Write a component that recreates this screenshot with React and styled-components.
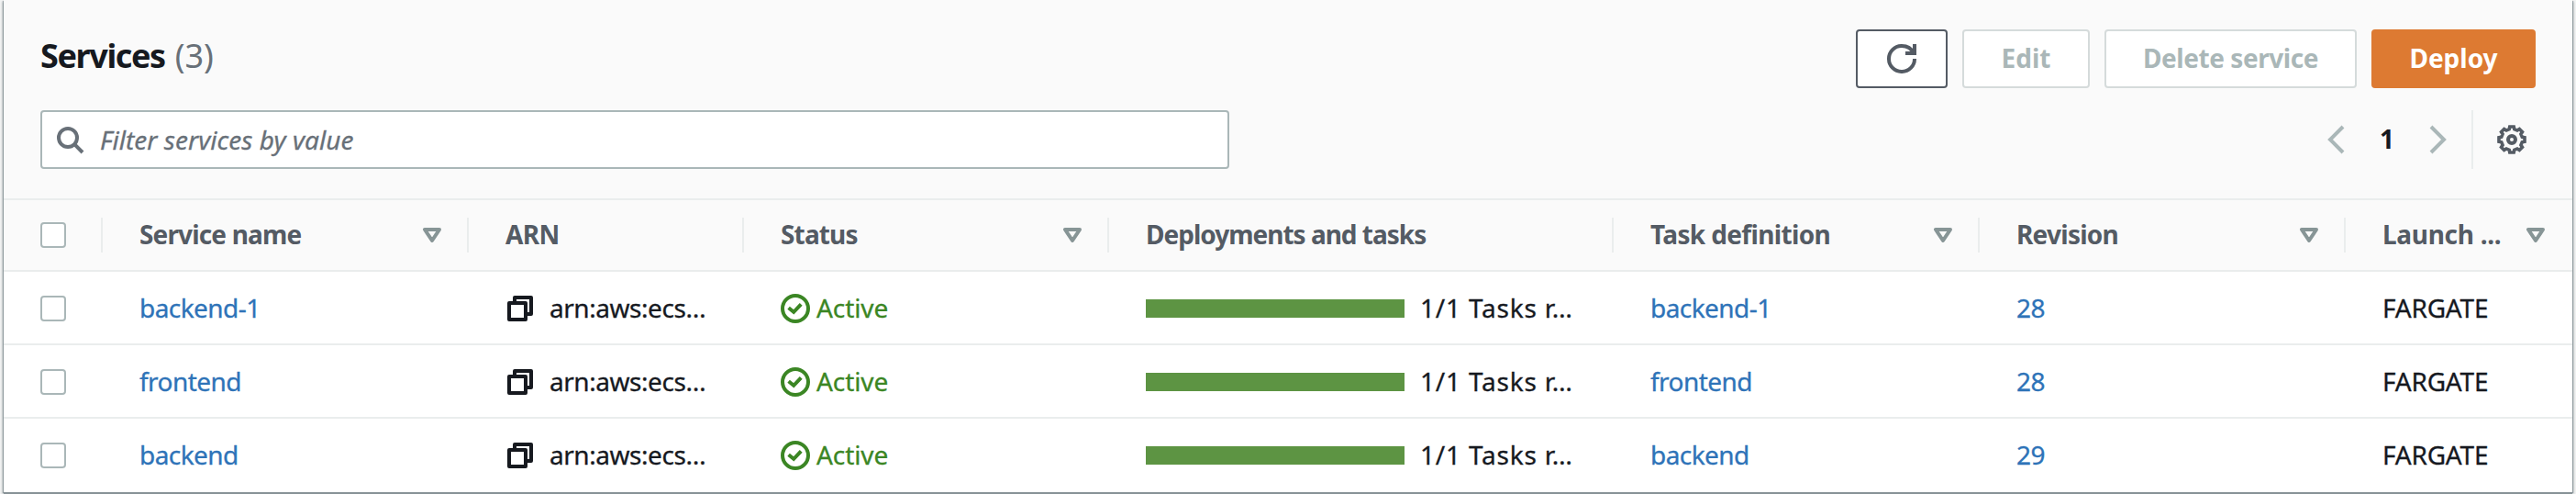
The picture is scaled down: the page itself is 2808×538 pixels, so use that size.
import React from 'react';
import styled, { createGlobalStyle, css } from 'styled-components';

const GlobalStyle = createGlobalStyle`
  * { box-sizing: border-box; }
  body {
    margin: 0;
    background: #f2f3f3;
    color: #16191f;
    font-family: "Noto Sans", "Open Sans", sans-serif;
    font-size: 28px;
    line-height: 44px;
  }
`;

const Page = styled.main`
  width: 2808px;
  height: 538px;
  padding: 0 4px 2px;
  overflow: hidden;
`;

const Panel = styled.section`
  height: 536px;
  background: #fff;
  box-shadow: 0 2px 0 0 #879296, 1px 1px 1px 0 rgba(0, 28, 36, 0.3), -1px 1px 1px 0 rgba(0, 28, 36, 0.3), 2px 2px 2px 0 rgba(0, 28, 36, 0.15), -2px 2px 2px 0 rgba(0, 28, 36, 0.15);
`;

const Header = styled.header`
  height: 216px;
  padding: 32px 40px;
  background: #fafafa;
  display: flex;
  flex-direction: column;
  gap: 24px;
`;

const HeaderRow = styled.div`
  display: flex;
  justify-content: space-between;
  align-items: center;
  height: 64px;
`;

const Title = styled.h2`
  display: flex;
  gap: 11px;
  margin: 0 0 6px;
  font-size: 36px;
  font-weight: 700;
  letter-spacing: -1.4px;
`;

const Count = styled.span`
  font-weight: 400;
  letter-spacing: 0;
  color: #687078;
`;

const Actions = styled.div`
  display: flex;
  gap: 16px;
`;

const variants = {
  normal: css`color: #545b64; border-color: #545b64; background: #fff;`,
  disabled: css`color: #aab7b8; border-color: #d5dbdb; background: #fff;`,
  primary: css`color: #fff; border-color: #dd7a32; background: #dd7a32;`,
};

const Button = styled.button`
  display: flex;
  align-items: center;
  justify-content: center;
  width: ${(p) => p.$width}px;
  height: 64px;
  padding: 0;
  border: 2px solid;
  border-radius: 4px;
  font: 700 28px "Noto Sans", sans-serif;
  letter-spacing: ${(p) => p.$track ?? 0}px;
  ${(p) => variants[p.$variant]}
`;

const Label = styled.span`
  padding-bottom: 2px;
  -webkit-text-stroke: ${(p) => (p.$bold ? 0 : 0.3)}px currentColor;
`;

const SearchBox = styled.div`
  display: flex;
  align-items: center;
  width: 1296px;
  height: 64px;
  padding-left: 14px;
  gap: 17px;
  border: 2px solid #aab7b8;
  border-radius: 4px;
  background: #fff;
  color: #687078;
  font-style: italic;
  letter-spacing: 0.05px;
  -webkit-text-stroke: 0.3px currentColor;
`;

const Icon = styled.svg`
  display: block;
  flex: none;
  width: 32px;
  height: 32px;
  fill: none;
  stroke: currentColor;
  stroke-width: 2;
`;

const Tools = styled.div`
  display: flex;
  align-items: center;
  height: 64px;
  color: #aab7b8;
`;

const PageNumber = styled.span`
  width: 80px;
  padding-bottom: 2px;
  text-align: center;
  font-weight: 700;
  color: #16191f;
`;

const Settings = styled.div`
  display: flex;
  align-items: center;
  height: 64px;
  margin-left: 20px;
  padding: 0 10px 0 26px;
  border-left: 2px solid #eaeded;
  color: #545b64;
`;

const Row = styled.div`
  display: grid;
  grid-template-columns: 108px 399px 300px 398px 550px 399px 399px 247px;
  align-items: center;
  height: 80px;
  padding-top: 2px;
  border-top: 2px solid #eaeded;
`;

const HeadRow = styled(Row)`
  height: 78px;
  padding-top: 0;
  background: #fafafa;
  color: #545b64;
  font-weight: 700;
`;

const CheckCell = styled.div`
  display: flex;
  align-items: center;
  height: 38px;
  padding-left: 40px;
  border-right: ${(p) => (p.$head ? '2px solid #eaeded' : '0')};
`;

const Checkbox = styled.span`
  width: 28px;
  height: 28px;
  border: 2px solid #aab7b8;
  border-radius: 4px;
  background: #fff;
`;

const HeadCell = styled.div`
  display: flex;
  align-items: center;
  justify-content: space-between;
  height: 38px;
  padding: 0 ${(p) => (p.$last ? 24 : 22)}px 0 40px;
  border-right: ${(p) => (p.$last ? '0' : '2px solid #eaeded')};
  letter-spacing: ${(p) => p.$track}px;
  white-space: nowrap;
`;

const Cell = styled.div`
  display: flex;
  align-items: center;
  padding-left: 40px;
  letter-spacing: ${(p) => p.$track ?? 0}px;
  white-space: nowrap;
`;

const Link = styled(Label)`
  color: #2e73b8;
  letter-spacing: -0.55px;
`;

const Status = styled.span`
  display: flex;
  align-items: center;
  gap: 7px;
  color: #3b8624;
`;

const Arn = styled.span`
  display: flex;
  align-items: center;
  gap: 16px;
`;

const Bar = styled.span`
  width: 282px;
  height: 20px;
  margin-right: 17px;
  background: #5d9443;
`;

const SortIcon = () => (
  <Icon viewBox="0 0 16 16">
    <path d="M4 5h8L8 11z" stroke="#879596" strokeLinejoin="round" />
  </Icon>
);

const SearchIcon = () => (
  <Icon viewBox="0 0 16 16">
    <circle cx="7" cy="7" r="5" />
    <path d="M10.6 10.6L15 15" />
  </Icon>
);

const RefreshIcon = () => (
  <Icon viewBox="0 0 16 16">
    <path d="M10 5h5V0" />
    <path d="M15 8a6.9 6.9 0 0 1-7 7 6.9 6.9 0 0 1-7-7 6.9 6.9 0 0 1 7-7c3 0 5.4 1.6 6.5 4" />
  </Icon>
);

const polar = (radius, degrees) => {
  const a = (degrees * Math.PI) / 180;
  return `${(8 + radius * Math.cos(a)).toFixed(2)} ${(8 + radius * Math.sin(a)).toFixed(2)}`;
};

const gearOutline = `M${Array.from({ length: 8 }, (_, i) => {
  const a = i * 45;
  return [polar(5.8, a - 14), polar(7.1, a - 9), polar(7.1, a + 9), polar(5.8, a + 14)].join('L');
}).join('L')}Z`;

const GearIcon = () => (
  <Icon viewBox="0 0 16 16">
    <path d={gearOutline} strokeWidth="1.8" />
    <circle cx="8" cy="8" r="2" />
  </Icon>
);

const ChevronLeft = () => (
  <Icon viewBox="0 0 16 16"><path d="M12 1L5 8l7 7" /></Icon>
);

const ChevronRight = () => (
  <Icon viewBox="0 0 16 16"><path d="M4 1l7 7-7 7" /></Icon>
);

const CopyIcon = () => (
  <Icon viewBox="0 0 16 16" strokeLinejoin="round">
    <path d="M2 5h9v9H2z" />
    <path d="M5 5V2h9v9h-3" />
  </Icon>
);

const CheckIcon = () => (
  <Icon viewBox="0 0 16 16">
    <circle cx="8" cy="8" r="7" />
    <path d="M4.3 7.600l2.800 2.300 4-4.200" />
  </Icon>
);

const columns = [
  { label: 'Service name', sort: true, track: -0.85 },
  { label: 'ARN', track: -0.6 },
  { label: 'Status', sort: true, track: -0.85 },
  { label: 'Deployments and tasks', track: -1 },
  { label: 'Task definition', sort: true, track: -0.65 },
  { label: 'Revision', sort: true, track: -0.75 },
  { label: 'Launch ...', sort: true, track: -0.3 },
];

const services = [
  { name: 'backend-1', revision: 28 },
  { name: 'frontend', revision: 28 },
  { name: 'backend', revision: 29 },
];

export default function App() {
  return (
    <Page>
      <GlobalStyle />
      <Panel>
        <Header>
          <HeaderRow>
            <Title>Services <Count>(3)</Count></Title>
            <Actions>
              <Button $variant="normal" $width={100}><RefreshIcon /></Button>
              <Button $variant="disabled" $width={139}><Label $bold>Edit</Label></Button>
              <Button $variant="disabled" $width={275} $track={-0.45}><Label $bold>Delete service</Label></Button>
              <Button $variant="primary" $width={179}><Label $bold>Deploy</Label></Button>
            </Actions>
          </HeaderRow>
          <HeaderRow>
            <SearchBox><SearchIcon />Filter services by value</SearchBox>
            <Tools>
              <ChevronLeft />
              <PageNumber>1</PageNumber>
              <ChevronRight />
              <Settings><GearIcon /></Settings>
            </Tools>
          </HeaderRow>
        </Header>
        <HeadRow>
          <CheckCell $head><Checkbox /></CheckCell>
          {columns.map((c, i) => (
            <HeadCell key={c.label} $track={c.track} $last={i === columns.length - 1}>
              <Label $bold>{c.label}</Label>
              {c.sort && <SortIcon />}
            </HeadCell>
          ))}
        </HeadRow>
        {services.map((s) => (
          <Row key={s.name}>
            <CheckCell><Checkbox /></CheckCell>
            <Cell><Link as="a">{s.name}</Link></Cell>
            <Cell $track={-0.45}><Arn><CopyIcon /><Label>arn:aws:ecs…</Label></Arn></Cell>
            <Cell $track={-0.1}><Status><CheckIcon /><Label>Active</Label></Status></Cell>
            <Cell $track={0.8}><Bar /><Label>1/1 Tasks r…</Label></Cell>
            <Cell><Link as="a">{s.name}</Link></Cell>
            <Cell><Link as="a">{s.revision}</Link></Cell>
            <Cell $track={-0.2}><Label>FARGATE</Label></Cell>
          </Row>
        ))}
      </Panel>
    </Page>
  );
}
